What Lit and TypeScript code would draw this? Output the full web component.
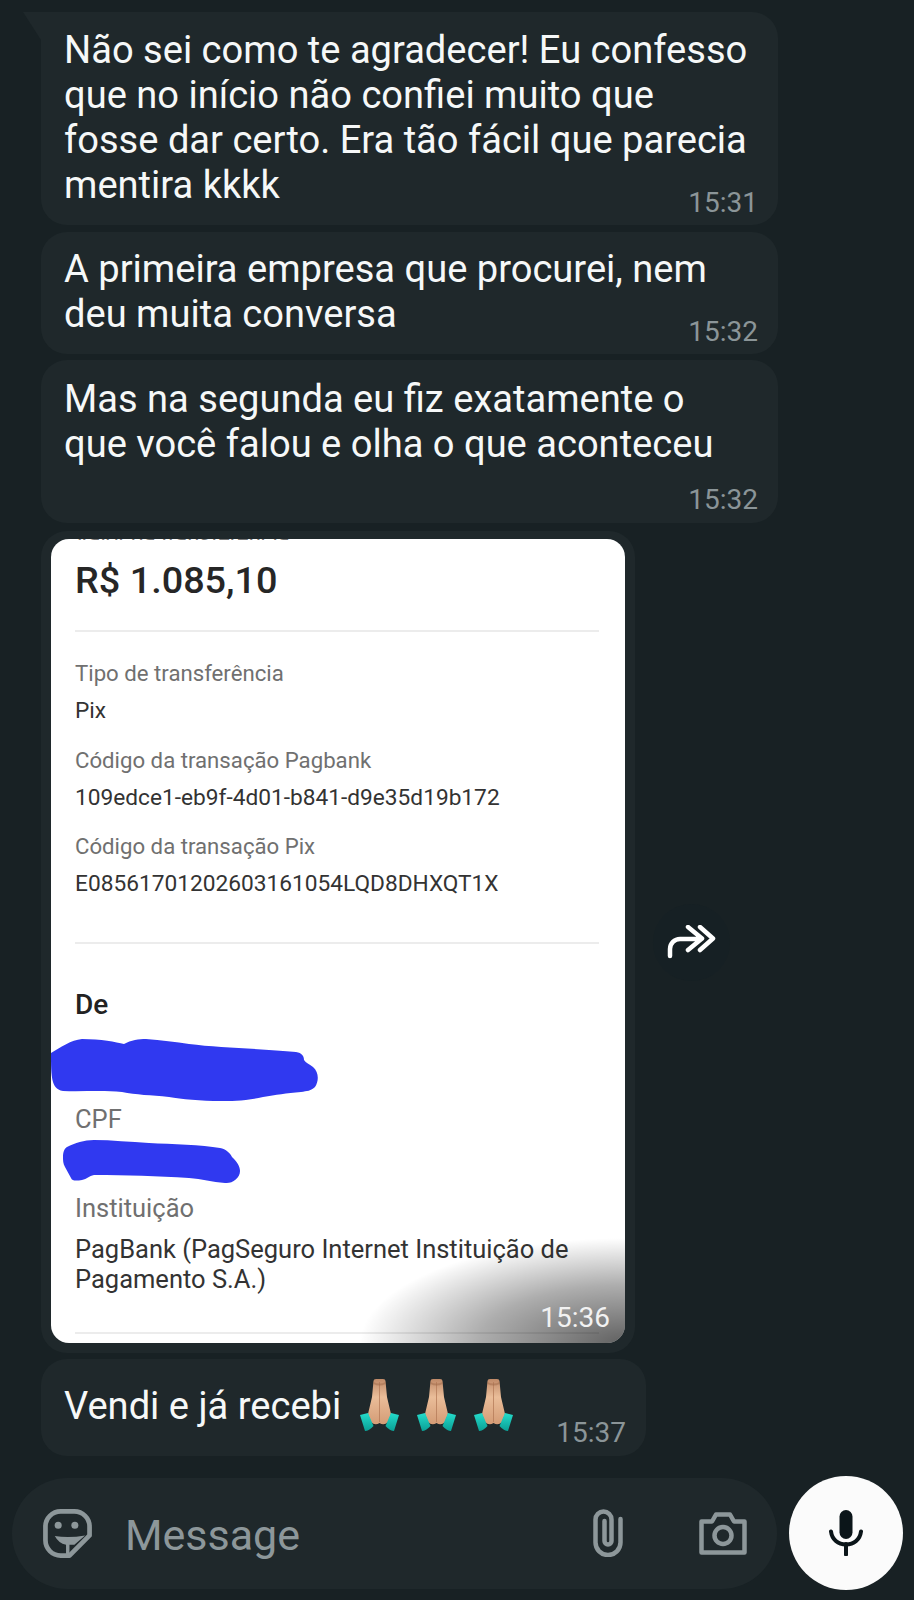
import { LitElement, css, html, svg } from "lit";
import { customElement } from "lit/decorators.js";

const prayHands = html`<svg class="emoji" viewBox="0 0 39 52">
  <defs>
    <linearGradient id="skin" x1="0" x2="0" y1="0" y2="1">
      <stop offset="0" stop-color="#c08a68" />
      <stop offset="0.4" stop-color="#eabd99" />
      <stop offset="1" stop-color="#d49c76" />
    </linearGradient>
    <linearGradient id="cuff" x1="0" x2="0" y1="0" y2="1">
      <stop offset="0" stop-color="#25dccb" />
      <stop offset="1" stop-color="#0a9f95" />
    </linearGradient>
  </defs>
  <path fill="url(#skin)" d="M13.500 2Q13.500 0 16 0H23Q25.500 0 25.500 2L27 18L31 35L28 43Q24 47 19.500 44Q15 47 11 43L8 35L12 18Z" />
  <path fill="none" stroke="#b07654" stroke-width="1" opacity=".7" d="M19.500 3V43" />
  <path fill="#a06a4a" opacity=".5" d="M13.500 3Q19.500 6 25.500 3V5Q19.500 8 13.500 5Z" />
  <path fill="url(#cuff)" d="M0 36L8 34L13.500 47Q9 52 5 52Z" />
  <path fill="url(#cuff)" d="M39 36L31 34L25.500 47Q30 52 34 52Z" />
</svg>`;

const forwardIcon = svg`<path d="M3 31V24a10 10 0 0 1 10-10H34M21 2L35 13.500L21 25M33 2L46 13.500L33 25" fill="none" stroke="#fff" stroke-width="4.500" stroke-linecap="round" stroke-linejoin="round" />`;

@customElement("app-root")
export class AppRoot extends LitElement {
  render() {
    return html`
      <div class="chat">
        <div class="bubble first">
          <div class="text">
            Não sei como te agradecer! Eu confesso<br />
            que no início não confiei muito que<br />
            fosse dar certo. Era tão fácil que parecia<br />
            mentira kkkk
          </div>
          <div class="time overlap">15:31</div>
        </div>
        <div class="bubble second">
          <div class="text">
            A primeira empresa que procurei, nem<br />
            deu muita conversa
          </div>
          <div class="time overlap">15:32</div>
        </div>
        <div class="bubble third">
          <div class="text">
            Mas na segunda eu fiz exatamente o<br />
            que você falou e olha o que aconteceu
          </div>
          <div class="time">15:32</div>
        </div>

        <div class="image-row">
          <div class="image-bubble">${this._renderReceipt()}</div>
          <div class="forward">
            <svg width="50" height="34" viewBox="0 0 50 34">${forwardIcon}</svg>
          </div>
        </div>

        <div class="bubble last">
          <span class="text">Vendi e já recebi</span>
          <span class="emojis">${prayHands}${prayHands}${prayHands}</span>
          <span class="time">15:37</span>
        </div>
      </div>

      <div class="composer">
        <div class="input">
          <svg class="sticker" width="49" height="49" viewBox="0 0 50 50">
            <path d="M47.500 27V18A15.500 15.500 0 0 0 32 2.500H18A15.500 15.500 0 0 0 2.500 18V32A15.500 15.500 0 0 0 18 47.500H27Z" fill="none" stroke="#8d979a" stroke-width="4.800" stroke-linejoin="round" />
            <circle cx="15.500" cy="16.500" r="3.600" fill="#8d979a" />
            <circle cx="32.500" cy="16.500" r="3.600" fill="#8d979a" />
            <path d="M12 27.500Q26 30 43 27L32 36.500H27V47H23.500V36.500Q16 35 12 27.500Z" fill="#8d979a" />
          </svg>
          <span class="placeholder">Message</span>
          <svg class="clip" width="30" height="48" viewBox="0 0 30 48">
            <path d="M27.500 10V33.500a12.500 12.500 0 0 1-25 0V10.500a8 8 0 0 1 16 0V32a3.500 3.500 0 0 1-7 0V12" fill="none" stroke="#8d979a" stroke-width="4.500" stroke-linecap="round" />
          </svg>
          <svg class="camera" width="48" height="43" viewBox="0 0 48 43">
            <path d="M2.500 9.500H13L17 2.500H31L35 9.500H45.500V40.500H2.500Z" fill="none" stroke="#8d979a" stroke-width="4.500" stroke-linejoin="round" />
            <circle cx="24" cy="23.500" r="8.500" fill="none" stroke="#8d979a" stroke-width="4.500" />
          </svg>
        </div>
        <div class="mic">
          <svg width="34" height="46" viewBox="0 0 34 46">
            <rect x="10.500" y="0" width="13" height="29" rx="6.500" fill="#0b1519" />
            <path d="M2 21.500C3 29.500 9 34.500 17 34.500S31 29.500 32 21.500" fill="none" stroke="#0b1519" stroke-width="4" stroke-linecap="round" />
            <path d="M17 34V44.500" fill="none" stroke="#0b1519" stroke-width="4" stroke-linecap="round" />
          </svg>
        </div>
      </div>
    `;
  }

  private _renderReceipt() {
    return html`
      <div class="receipt">
        <div class="cut">Valor da transferência</div>
        <div class="amount">R$ 1.085,10</div>
        <div class="rule"></div>
        <div class="label tipo">Tipo de transferência</div>
        <div class="value">Pix</div>
        <div class="label">Código da transação Pagbank</div>
        <div class="value">109edce1-eb9f-4d01-b841-d9e35d19b172</div>
        <div class="label pix">Código da transação Pix</div>
        <div class="value">E08561701202603161054LQD8DHXQT1X</div>
        <div class="rule second"></div>
        <div class="heading">De</div>
        <svg class="scribble one" width="268" height="62" viewBox="0 0 268 62">
          <path d="M0 14C10 8 20 1 31 0C50 0 65 3 73 5C80 1 88 0 95 0C110 1 125 3 138 5C170 9 215 10 245 13C251 14 253 17 253 21C255 24 258 25 262 28C268 33 268 42 264 48C260 52 256 52 250 53C235 54 225 56 212 58C195 62 180 62 170 62C150 62 130 60 118 58C100 56 85 56 71 53C50 51 30 53 12 52C5 51 3 46 2 43C0 36 0 25 0 14Z" fill="#3039f0" />
        </svg>
        <div class="label big cpf">CPF</div>
        <svg class="scribble two" width="180" height="44" viewBox="0 0 180 44">
          <path d="M1 17C1 11 3 8 5 7C13 3 22 0 32 0C50 0 68 2 87 3C110 4 140 5 158 8C164 9 168 13 170 17C175 22 178 26 178 31C178 38 170 44 163 43C150 42 140 39 127 38C95 36 65 35 32 35C27 36 25 39 20 40C14 41 10 41 9 38C7 34 5 31 3 27C1 24 1 20 1 17Z" fill="#3039f0" />
        </svg>
        <div class="label big inst">Instituição</div>
        <div class="value wrap">PagBank (PagSeguro Internet Instituição de<br />Pagamento S.A.)</div>
        <div class="rule third-rule"></div>
        <div class="shade"></div>
        <div class="stamp">15:36</div>
      </div>
    `;
  }

  static styles = css`
    :host {
      display: block;
      width: 914px;
      height: 1600px;
      overflow: hidden;
      background: #182124;
      font-family: Roboto, "Liberation Sans", sans-serif;
    }

    .chat {
      display: flex;
      flex-direction: column;
      align-items: flex-start;
      padding: 12px 0 0 41px;
    }

    .bubble {
      position: relative;
      box-sizing: border-box;
      width: 737px;
      margin-bottom: 7px;
      padding: 16px 20px 17px 23px;
      background: #1f282b;
      border-radius: 26px;
    }

    .bubble.first {
      border-top-left-radius: 0;
    }

    .bubble.first::before {
      content: "";
      position: absolute;
      left: -18px;
      top: 0;
      width: 18px;
      height: 28px;
      background: #1f282b;
      clip-path: polygon(0 0, 100% 0, 100% 100%);
    }

    .bubble.second {
      margin-bottom: 6px;
      padding-top: 15px;
    }

    .bubble.third {
      margin-bottom: 8px;
      padding: 17px 20px 7px 23px;
    }

    .bubble.last {
      display: flex;
      align-items: flex-start;
      width: 605px;
      height: 97px;
      margin: 6px 0 0;
      padding: 25px 20px 0 23px;
    }

    .text {
      font-size: 38.1px;
      line-height: 45px;
      color: #f6f8f8;
    }

    .time {
      font-size: 28px;
      line-height: 32px;
      color: #8b9598;
      text-align: right;
    }

    .time.overlap {
      margin-top: -21px;
      margin-bottom: -11px;
    }

    .third .time {
      margin-top: 17px;
    }

    .last .time {
      margin: 33px 0 0 auto;
    }

    .emojis {
      display: flex;
      gap: 18px;
      margin: -5px 0 0 19px;
    }

    .emoji {
      display: block;
      width: 39px;
      height: 52px;
    }

    .image-row {
      display: flex;
      align-items: center;
      gap: 18px;
    }

    .image-bubble {
      box-sizing: border-box;
      width: 594px;
      height: 822px;
      padding: 8px 10px 10px;
      background: #1f282b;
      border-radius: 26px;
    }

    .receipt {
      position: relative;
      box-sizing: border-box;
      height: 804px;
      padding: 0 26px 0 24px;
      background: #fff;
      border-radius: 18px;
      overflow: hidden;
    }

    .cut {
      height: 1px;
      overflow: hidden;
      font-size: 22px;
      line-height: 0;
      color: #777;
    }

    .amount {
      margin-top: 20px;
      font-size: 37.8px;
      line-height: 40px;
      font-weight: 500;
      color: #262626;
    }

    .rule {
      height: 2px;
      margin-top: 30px;
      background: #ececec;
    }

    .label,
    .value,
    .heading {
      font-size: 22.2px;
      line-height: 28px;
    }

    .label {
      margin-top: 21px;
      color: #707070;
    }

    .label.tipo {
      margin-top: 27px;
    }

    .label.pix {
      margin-top: 20px;
    }

    .value {
      margin-top: 10px;
      font-size: 22.7px;
      color: #333;
    }

    .rule.second {
      margin-top: 44px;
    }

    .heading {
      margin-top: 46px;
      font-size: 28px;
      line-height: 30px;
      font-weight: 500;
      color: #222;
    }

    .scribble {
      display: block;
    }

    .scribble.one {
      margin: 19px 0 0 -24px;
    }

    .label.big {
      font-size: 25.5px;
    }

    .label.cpf {
      margin-top: 4px;
    }

    .scribble.two {
      margin: 7px 0 0 -13px;
    }

    .label.inst {
      margin-top: 10px;
    }

    .value.wrap {
      margin-top: 12px;
      font-size: 25.5px;
      line-height: 30px;
    }

    .rule.third-rule {
      margin-top: 38px;
    }

    .shade {
      position: absolute;
      inset: 0;
      background: radial-gradient(
        ellipse 265px 105px at 100% 100%,
        rgba(0, 0, 0, 0.62),
        rgba(0, 0, 0, 0.32) 55%,
        rgba(0, 0, 0, 0) 100%
      );
    }

    .stamp {
      position: absolute;
      right: 15px;
      bottom: 9px;
      font-size: 28px;
      line-height: 32px;
      color: #f2f2f2;
    }

    .forward {
      display: flex;
      align-items: center;
      justify-content: center;
      width: 77px;
      height: 77px;
      border-radius: 50%;
      background: #162024;
    }

    .composer {
      display: flex;
      align-items: center;
      gap: 12px;
      margin-top: 20px;
      padding-left: 12px;
    }

    .input {
      display: flex;
      align-items: center;
      box-sizing: border-box;
      width: 765px;
      height: 111px;
      padding: 0 30px 0 31px;
      background: #1f282b;
      border-radius: 56px;
    }

    .placeholder {
      margin-left: 33px;
      padding-top: 3px;
      font-size: 43px;
      color: #8d979a;
    }

    .clip {
      margin-left: auto;
    }

    .camera {
      margin-left: 76px;
    }

    .mic {
      display: flex;
      align-items: center;
      justify-content: center;
      width: 114px;
      height: 114px;
      border-radius: 50%;
      background: #fbfbfb;
    }
  `;
}
